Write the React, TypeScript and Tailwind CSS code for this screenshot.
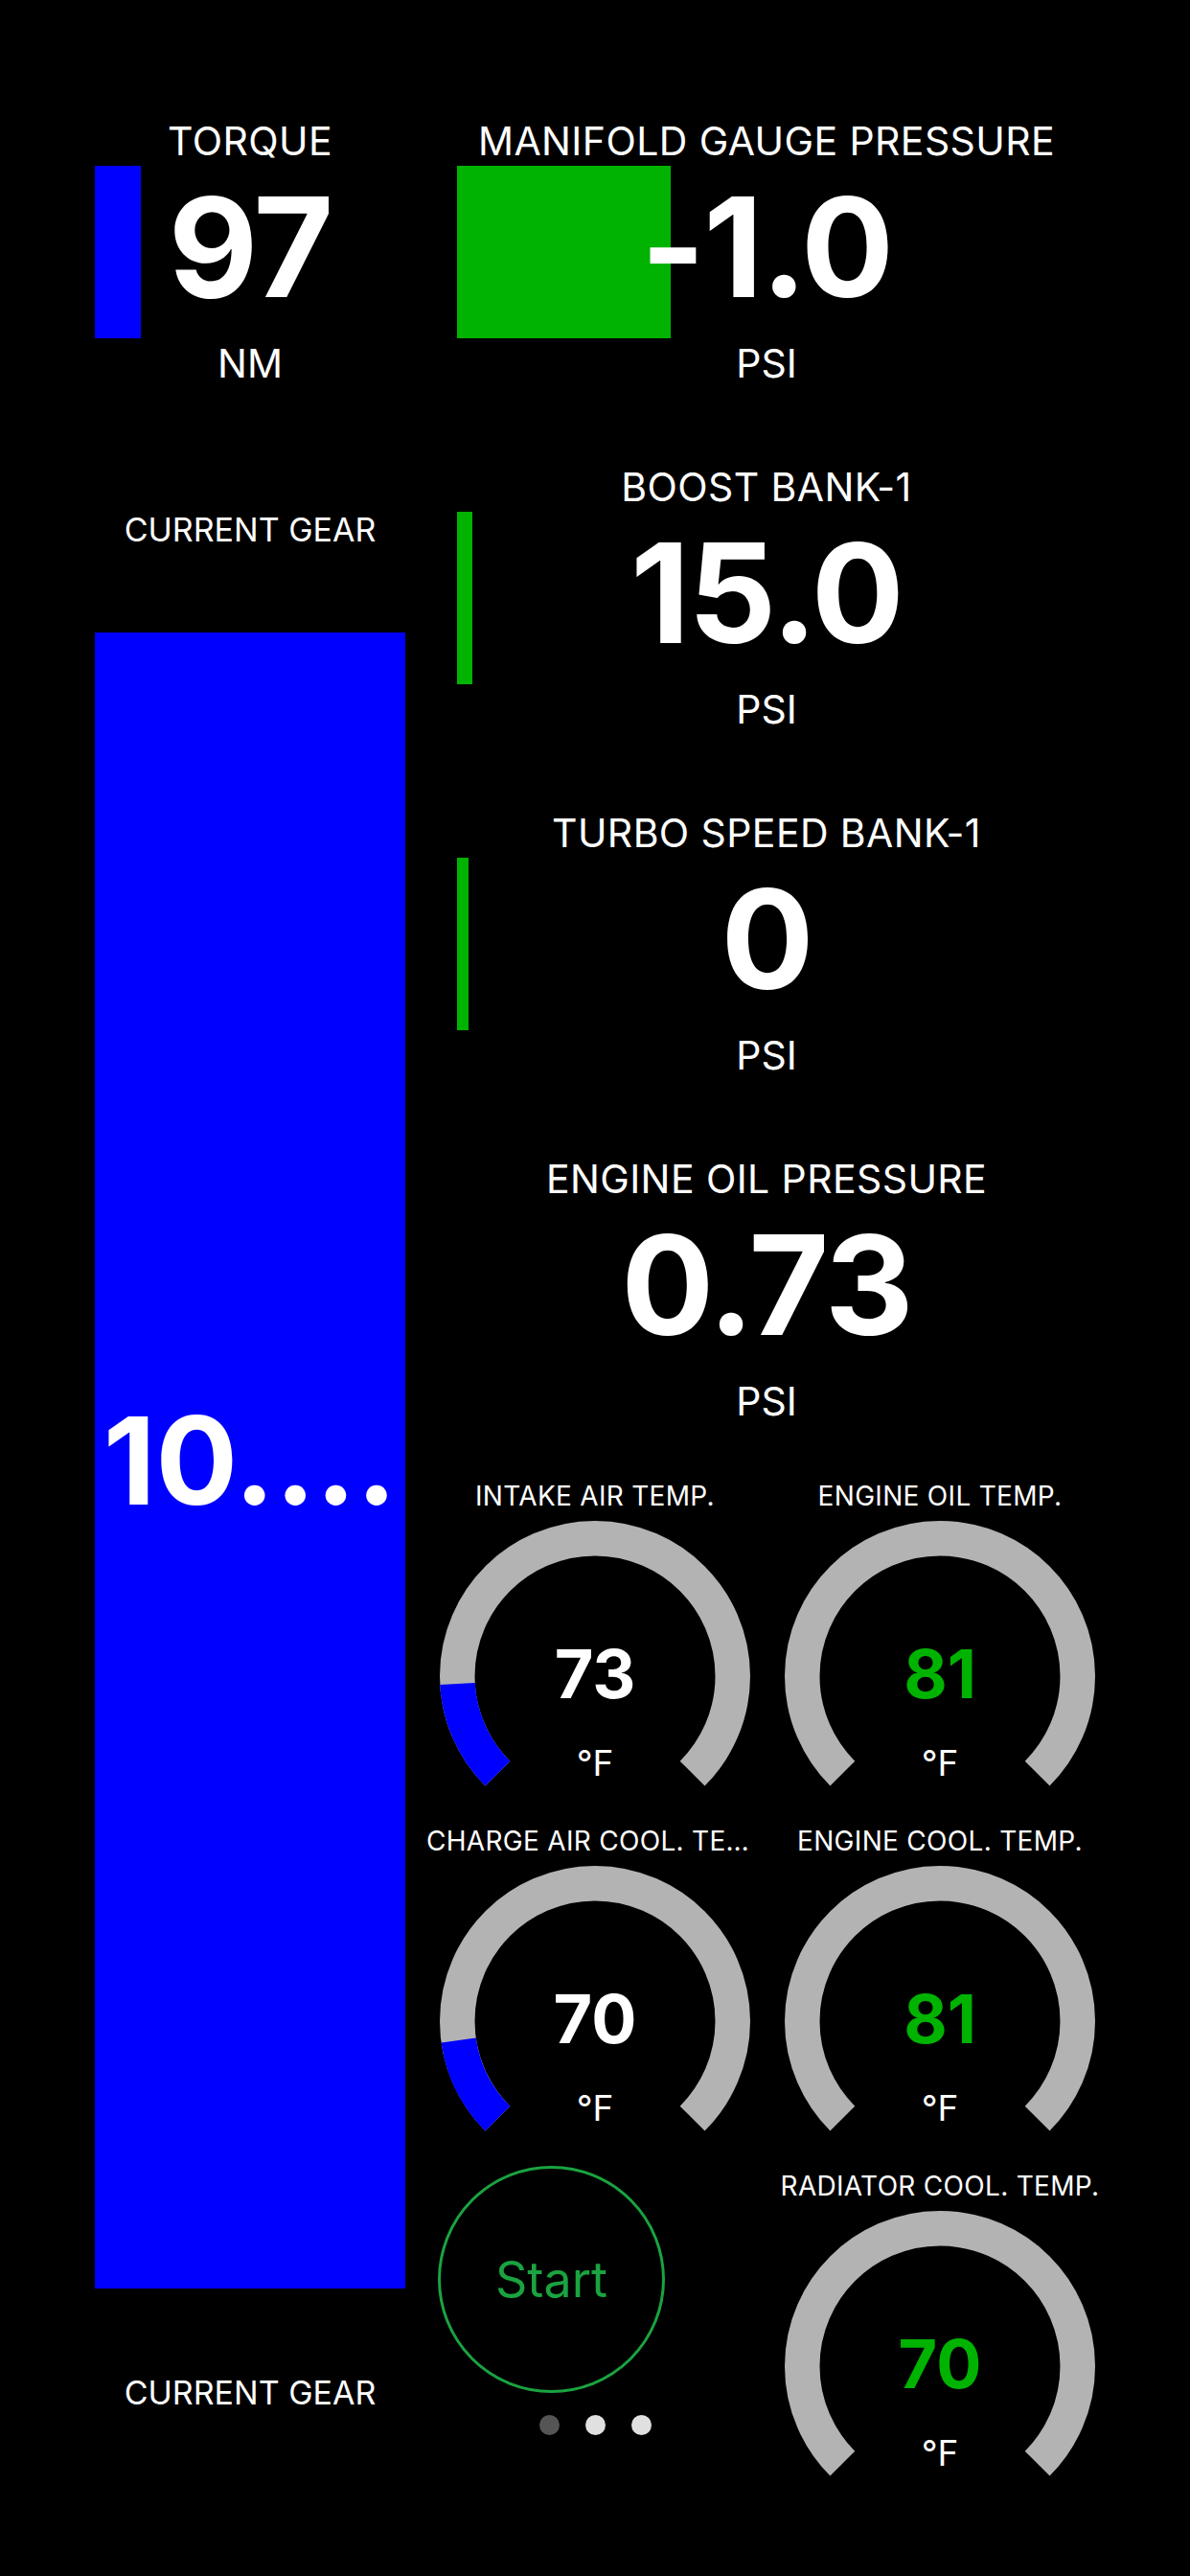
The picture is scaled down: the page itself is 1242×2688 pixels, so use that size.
import React from 'react';

const CX = 162;
const CY = 162;
const R = 143.75;

// point on the gauge ring, angle in degrees (svg: 0 = right, clockwise)
const pt = (deg: number) => {
  const a = (deg * Math.PI) / 180;
  return [CX + R * Math.cos(a), CY + R * Math.sin(a)];
};

const arcPath = (from: number, to: number) => {
  const [x1, y1] = pt(from);
  const [x2, y2] = pt(to);
  const large = to - from > 180 ? 1 : 0;
  return `M ${x1} ${y1} A ${R} ${R} 0 ${large} 1 ${x2} ${y2}`;
};

type MetricProps = {
  label: string;
  value: string;
  unit: string;
  bar?: string;
};

/**
 * Metric: label, big value over a level bar, unit
 */
const Metric = ({ label, value, unit, bar }: MetricProps) => {
  return (
    <div className="flex flex-col items-center">
      <div className="text-[41px] leading-[52px] tracking-[0.4px] text-white whitespace-nowrap">{label}</div>
      <div className="grid h-[180px] w-full">
        {bar && <div className={`col-start-1 row-start-1 h-full justify-self-start ${bar}`} />}
        <div className="col-start-1 row-start-1 self-center justify-self-center pb-[10px] text-[144px] font-bold leading-none tracking-[-2px] text-white">
          {value}
        </div>
      </div>
      <div className="text-[41px] leading-[52px] text-white">{unit}</div>
    </div>
  );
};

type GaugeProps = {
  label: string;
  value: string;
  fill: number;
  green?: boolean;
};

/**
 * Gauge: 270° ring with blue fill
 */
const Gauge = ({ label, value, fill, green }: GaugeProps) => {
  return (
    <div className="flex h-[360px] flex-col items-center">
      <div className="w-[352px] truncate text-center text-[28px] leading-[34px] tracking-[0.3px] text-white">{label}</div>
      <svg className="mt-[9px]" width={324} height={317} viewBox="0 0 324 317">
        <path d={arcPath(135, 405)} fill="none" stroke="#b3b3b3" strokeWidth={36.5} />
        {fill > 0 && (
          <path d={arcPath(135, 135 + 270 * fill)} fill="none" stroke="#0000ff" strokeWidth={36.5} />
        )}
        <text
          x={CX}
          y={185}
          textAnchor="middle"
          fontSize={70}
          fontWeight={700}
          fill={green ? '#00b300' : '#ffffff'}
          fontFamily="Inter, sans-serif"
        >
          {value}
        </text>
        <text x={CX} y={266} textAnchor="middle" fontSize={37} fill="#ffffff" fontFamily="Inter, sans-serif">
          °F
        </text>
      </svg>
    </div>
  );
};

const StartPart = () => {
  return (
    <div className="flex h-[360px] flex-col">
      <button className="-mt-[4px] ml-[16px] flex h-[237px] w-[237px] items-center justify-center rounded-full border-[3px] border-[#1aa340] text-[52px] text-[#1aa340]">
        Start
      </button>
      <div className="mt-[23px] flex justify-center gap-[27px]">
        <div className="h-[21px] w-[21px] rounded-full bg-[#555555]" />
        <div className="h-[21px] w-[21px] rounded-full bg-[#e0e0e0]" />
        <div className="h-[21px] w-[21px] rounded-full bg-[#e0e0e0]" />
      </div>
    </div>
  );
};

const App = () => {
  return (
    <div className="flex h-[2688px] w-[1242px] overflow-hidden bg-black pl-[99px] pt-[121px] font-['Inter',sans-serif]">
      {/* left column */}
      <div className="flex w-[324px] flex-col items-center">
        <div className="w-full">
          <Metric label="TORQUE" value="97" unit="NM" bar="w-[48px] bg-[#0000ff]" />
        </div>
        <div className="mt-[126px] text-[34px] leading-[44px] text-white">CURRENT GEAR</div>
        <div className="mt-[85px] flex h-[1728px] w-full items-center justify-center bg-[#0000ff]">
          <span className="text-[127px] font-bold leading-none text-white">10....</span>
        </div>
        <div className="mt-[87px] text-[34px] leading-[44px] text-white">CURRENT GEAR</div>
      </div>

      {/* right column */}
      <div className="ml-[18px] flex w-[720px] flex-col">
        <div className="flex flex-col gap-[77px] pl-[36px] pr-[38px]">
          <Metric label="MANIFOLD GAUGE PRESSURE" value="-1.0" unit="PSI" bar="w-[223px] bg-[#00b300]" />
          <Metric label="BOOST BANK-1" value="15.0" unit="PSI" bar="w-[16px] bg-[#00b300]" />
          <Metric label="TURBO SPEED BANK-1" value="0" unit="PSI" bar="w-[12px] bg-[#00b300]" />
          <Metric label="ENGINE OIL PRESSURE" value="0.73" unit="PSI" />
        </div>
        <div className="mt-[56px] grid grid-cols-2">
          <Gauge label="INTAKE AIR TEMP." value="73" fill={0.155} />
          <Gauge label="ENGINE OIL TEMP." value="81" fill={0} green />
          <Gauge label="CHARGE AIR COOL. TEMP." value="70" fill={0.137} />
          <Gauge label="ENGINE COOL. TEMP." value="81" fill={0} green />
          <StartPart />
          <Gauge label="RADIATOR COOL. TEMP." value="70" fill={0} green />
        </div>
      </div>
    </div>
  );
};

export default App;
